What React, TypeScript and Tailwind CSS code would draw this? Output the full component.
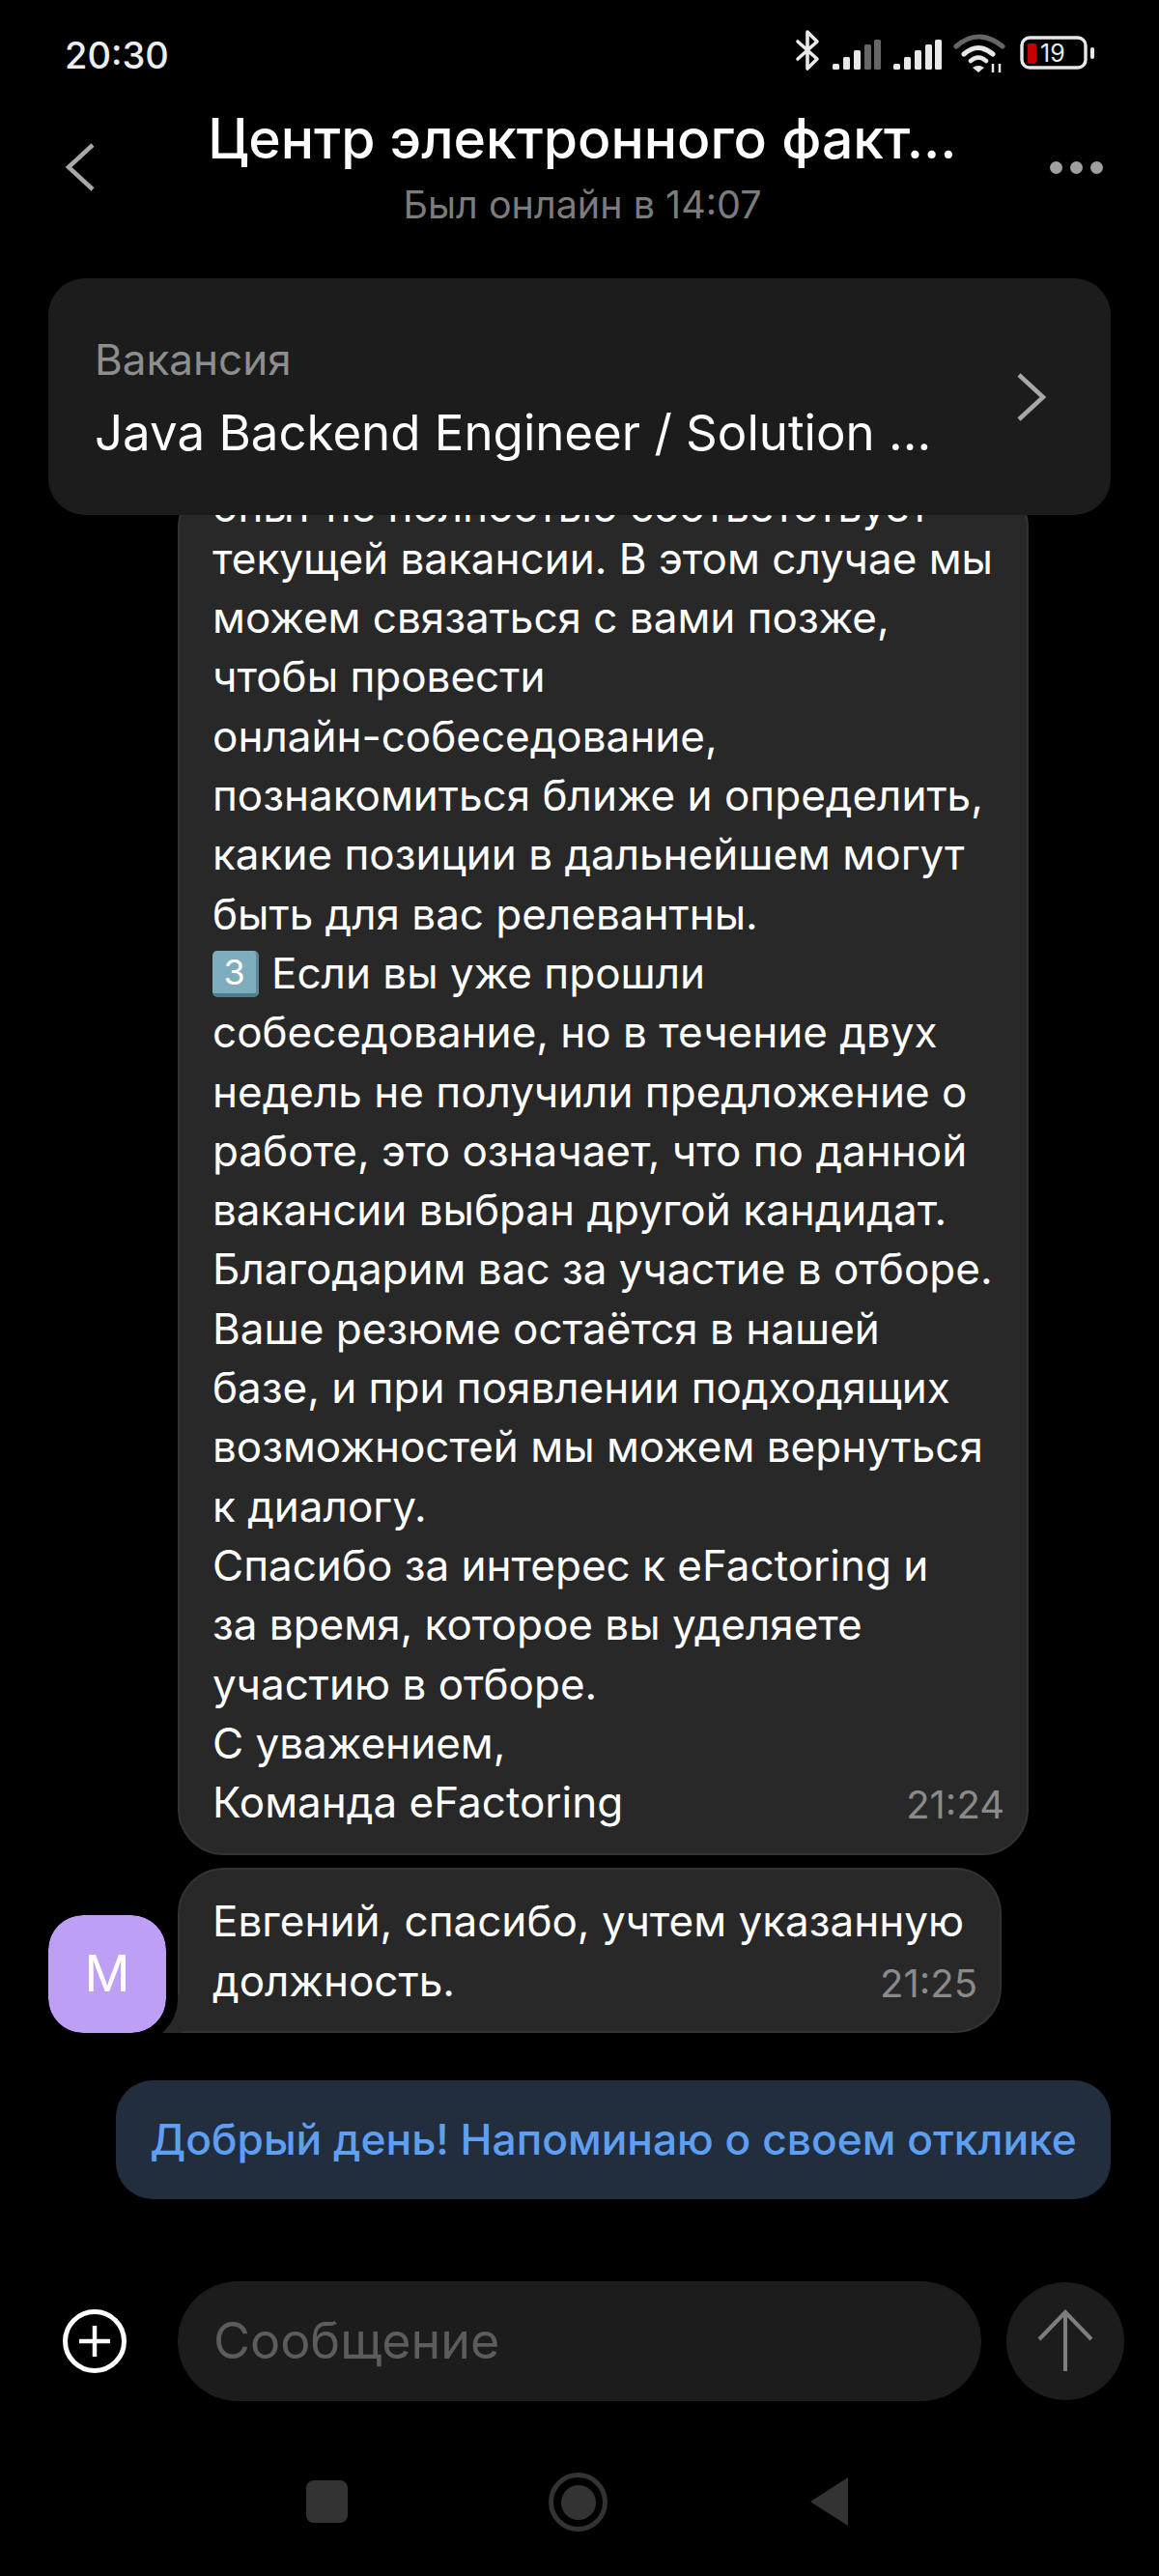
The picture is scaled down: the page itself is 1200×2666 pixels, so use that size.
const FONT = "font-['Inter','Noto_Sans',sans-serif]";

const lines = [
  "текущей вакансии. В этом случае мы",
  "можем связаться с вами позже,",
  "чтобы провести",
  "онлайн-собеседование,",
  "познакомиться ближе и определить,",
  "какие позиции в дальнейшем могут",
  "быть для вас релевантны.",
  "KEY",
  "собеседование, но в течение двух",
  "недель не получили предложение о",
  "работе, это означает, что по данной",
  "вакансии выбран другой кандидат.",
  "Благодарим вас за участие в отборе.",
  "Ваше резюме остаётся в нашей",
  "базе, и при появлении подходящих",
  "возможностей мы можем вернуться",
  "к диалогу.",
  "Спасибо за интерес к eFactoring и",
  "за время, которое вы уделяете",
  "участию в отборе.",
  "С уважением,",
];

function StatusIcons() {
  return (
    <svg width="320" height="50" viewBox="0 0 320 50" className="block" fill="none">
      <path d="M6 13 L26 31 L16 41 L16 3 L26 13 L6 31" stroke="#e8e8e8" strokeWidth="3.6" strokeLinejoin="round" strokeLinecap="round" />
      <g fill="#e8e8e8">
        <rect x="42" y="36" width="7" height="6" rx="1.5" />
        <rect x="53" y="29" width="7" height="13" rx="1.5" />
        <rect x="64" y="22" width="7" height="20" rx="1.5" />
      </g>
      <g fill="#666">
        <rect x="75" y="16" width="7" height="26" rx="1.5" />
        <rect x="85" y="11" width="7" height="31" rx="1.5" />
      </g>
      <g fill="#e8e8e8">
        <rect x="105" y="36" width="7" height="6" rx="1.5" />
        <rect x="116" y="29" width="7" height="13" rx="1.5" />
        <rect x="127" y="22" width="7" height="20" rx="1.5" />
        <rect x="138" y="16" width="7" height="26" rx="1.5" />
        <rect x="148" y="11" width="7" height="31" rx="1.5" />
      </g>
      <path d="M170 18 Q193 -2 218 18" stroke="#666" strokeWidth="5" strokeLinecap="round" />
      <path d="M178 26 Q193 13 208 26" stroke="#e8e8e8" strokeWidth="5" strokeLinecap="round" />
      <path d="M185 33 Q193 26 201 33" stroke="#e8e8e8" strokeWidth="4.5" strokeLinecap="round" />
      <path d="M187 40 Q193 36 199 40 L193 45 Z" fill="#e8e8e8" />
      <path d="M208 36 V45 M215 36 V45" stroke="#e8e8e8" strokeWidth="2.5" />
      <rect x="238" y="2" width="66" height="31" rx="8" transform="translate(0 7)" stroke="#e8e8e8" strokeWidth="3.4" />
      <rect x="244" y="15" width="9" height="21" rx="2" fill="#c40000" />
      <rect x="309" y="19" width="4" height="12" rx="2" fill="#e8e8e8" />
    </svg>
  );
}

export default function App() {
  return (
    <div className={`${FONT} flex h-[2666px] w-[1200px] flex-col overflow-hidden bg-black text-white`}>
      <header className="h-[288px] flex-none">
        <div className="flex h-[112px] items-start justify-between pl-[67px] pr-[60px] pt-[27px]">
          <span className="text-[38px] font-medium leading-[60px] text-[#eeeeee]">20:30</span>
          <div className="relative mt-[3px]">
            <StatusIcons />
            <span className="absolute left-[257px] top-[9px] text-[25px] leading-[32px] text-[#e8e8e8]">19</span>
          </div>
        </div>
        <div className="flex items-center pl-[66px] pr-[58px]">
          <svg width="32" height="52" viewBox="0 0 32 52" fill="none" className="flex-none">
            <path d="M30 3 L5 26 L30 49" stroke="#a8a8a8" strokeWidth="4.5" />
          </svg>
          <div className="flex-1 pl-[21px] text-center">
            <div className="whitespace-nowrap text-[57px] font-medium leading-[64px]">Центр электронного факт...</div>
            <div className="mt-[14px] whitespace-nowrap text-[39.5px] leading-[44px] text-[#7c7c7c]">Был онлайн в 14:07</div>
          </div>
          <div className="flex flex-none gap-[8px]">
            <span className="size-[13px] rounded-full bg-[#a0a0a0]" />
            <span className="size-[13px] rounded-full bg-[#a0a0a0]" />
            <span className="size-[13px] rounded-full bg-[#a0a0a0]" />
          </div>
        </div>
      </header>

      <main className="flex min-h-0 flex-1 flex-col">
        <div className="relative z-10 mx-[50px] flex h-[245px] w-[1100px] flex-none items-center justify-between rounded-[38px] bg-[#1c1c1c] pl-[48px] pr-[66px]">
          <div>
            <div className="text-[44px] leading-[56px] text-[#8e8e8e]">Вакансия</div>
            <div className="mt-[18px] whitespace-nowrap text-[51px] leading-[60px]">Java Backend Engineer / Solution ...</div>
          </div>
          <svg width="32" height="52" viewBox="0 0 32 52" fill="none" className="flex-none">
            <path d="M3 3 L28 26 L3 49" stroke="#a8a8a8" strokeWidth="4.5" />
          </svg>
        </div>

        <div className="-mt-[100px] flex min-h-0 flex-1 flex-col justify-end overflow-hidden pb-[85px] text-[44px] leading-[61.3px]">
          <div className="ml-[184px] w-[881px] flex-none rounded-[48px] border-[2px] border-[#333333] bg-[#282828] pb-[22px] pl-[34px] pr-[23px]">
            <div className="whitespace-nowrap leading-[48px]">опыт не полностью соответствует</div>
            {lines.map((l) =>
              l === "KEY" ? (
                <div key={l} className="flex items-center whitespace-nowrap">
                  <span className="mr-[13px] flex size-[48px] flex-none items-center justify-center rounded-[5px] border-b-[4px] border-r-[3px] border-b-[#4d7c8e] border-r-[#5a8a9c] bg-[#80adbd] text-[36px] leading-none text-white">
                    3
                  </span>
                  Если вы уже прошли
                </div>
              ) : (
                <div key={l} className="whitespace-nowrap">{l}</div>
              )
            )}
            <div className="flex items-end justify-between whitespace-nowrap">
              <span>Команда eFactoring</span>
              <span className="text-[40px] leading-[56px] text-[#8a8a8a]">21:24</span>
            </div>
          </div>

          <div className="mt-[13px] flex flex-none items-end pl-[50px]">
            <div className="relative z-10 flex size-[122px] flex-none items-center justify-center rounded-[36px] bg-[#bda0f5] text-[52px] leading-none text-white outline-[12px] outline-black">
              М
            </div>
            <div className="relative ml-[12px] w-[853px] rounded-[48px] rounded-bl-none border-[2px] border-[#333333] bg-[#282828] pb-[21px] pl-[34px] pr-[23px] pt-[23px]">
              <span className="absolute -left-[24px] -bottom-[2px] h-[40px] w-[26px] bg-[#282828]" />
              <div className="whitespace-nowrap">Евгений, спасибо, учтем указанную</div>
              <div className="flex items-end justify-between whitespace-nowrap">
                <span>должность.</span>
                <span className="text-[40px] leading-[56px] text-[#8a8a8a]">21:25</span>
              </div>
            </div>
          </div>

          <div className="mx-[50px] mt-[49px] ml-[120px] flex h-[123px] w-[1030px] flex-none items-center justify-center rounded-[38px] bg-[#222e3e] text-[44.3px] font-medium text-[#5f9ff2]">
            <span className="whitespace-nowrap">Добрый день! Напоминаю о своем отклике</span>
          </div>
        </div>
      </main>

      <div className="flex h-[124px] flex-none items-center">
        <div className="flex w-[184px] flex-none justify-start pl-[65px]">
          <svg width="66" height="66" viewBox="0 0 66 66" fill="none">
            <circle cx="33" cy="33" r="30.5" stroke="#ffffff" strokeWidth="5" />
            <path d="M33 17 V49 M17 33 H49" stroke="#ffffff" strokeWidth="4.5" />
          </svg>
        </div>
        <div className="flex h-[124px] w-[832px] flex-none items-center rounded-full bg-[#1c1c1c] pl-[37px] text-[52px] text-[#5c5c5c]">
          Сообщение
        </div>
        <div className="ml-[26px] flex size-[122px] flex-none items-center justify-center rounded-full bg-[#1c1c1c]">
          <svg width="60" height="66" viewBox="0 0 60 66" fill="none">
            <path d="M30 3 V64 M3 31 L30 3 L57 31" stroke="#7e7e7e" strokeWidth="4" />
          </svg>
        </div>
      </div>

      <nav className="relative flex h-[181px] flex-none items-start pl-[317px] pt-[74px]">
        <span className="mt-[8px] h-[44px] w-[43px] rounded-[8px] bg-[#333333]" />
        <span className="ml-[208px] flex size-[61px] items-center justify-center rounded-full border-[5px] border-[#333333]">
          <span className="size-[36px] rounded-full bg-[#333333]" />
        </span>
        <svg width="40" height="52" viewBox="0 0 40 52" className="ml-[209px] mt-[4px]">
          <path d="M40 1 V51 L1 26 Z" fill="#333333" />
        </svg>
      </nav>
    </div>
  );
}
